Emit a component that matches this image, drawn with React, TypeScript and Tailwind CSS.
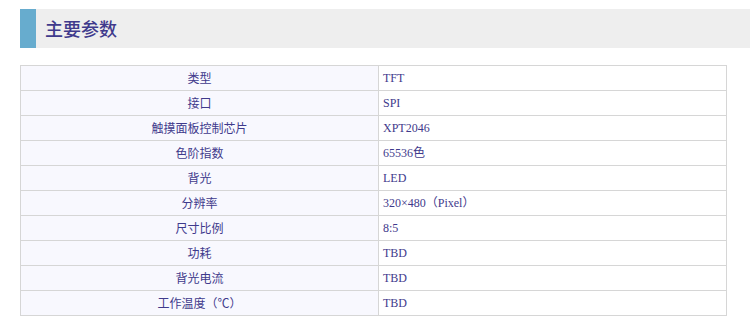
import React from "react";

const rows: [string, string][] = [
  ["类型", "TFT"],
  ["接口", "SPI"],
  ["触摸面板控制芯片", "XPT2046"],
  ["色阶指数", "65536色"],
  ["背光", "LED"],
  ["分辨率", "320×480（Pixel）"],
  ["尺寸比例", "8:5"],
  ["功耗", "TBD"],
  ["背光电流", "TBD"],
  ["工作温度（℃）", "TBD"],
];

export default function App() {
  return (
    <div className="w-[750px] h-[330px] bg-white overflow-hidden">
      <div className="pt-[9px] pl-[20px]">
        <div className="flex h-[39px] bg-[#eeeeee]">
          <div className="w-[16px] bg-[#67acce]" />
          <div
            className="flex items-center pl-[9px] text-[18px] font-medium text-[#3f3a8c]"
            style={{ fontFamily: '"Noto Sans CJK SC", "Noto Sans", sans-serif' }}
          >
            主要参数
          </div>
        </div>
      </div>
      <div className="ml-[20px] mt-[17px] w-[707px] border border-b-0 border-[#d6d6d6]">
        {rows.map(([k, v]) => (
          <div key={k} className="flex h-[25px] border-b border-[#d6d6d6]">
            <div
              className="w-[358px] border-r border-[#d6d6d6] bg-[#f8f8fe] flex items-center justify-center text-[12px] text-[#3f3a8c]"
              style={{ fontFamily: '"Noto Sans CJK SC", "Noto Sans", sans-serif' }}
            >
              {k}
            </div>
            <div
              className="flex-1 flex items-center pl-[4px] text-[12px] text-[#3f3a8c]"
              style={{ fontFamily: '"Liberation Serif", "Noto Sans CJK SC", serif' }}
            >
              {v}
            </div>
          </div>
        ))}
      </div>
    </div>
  );
}
